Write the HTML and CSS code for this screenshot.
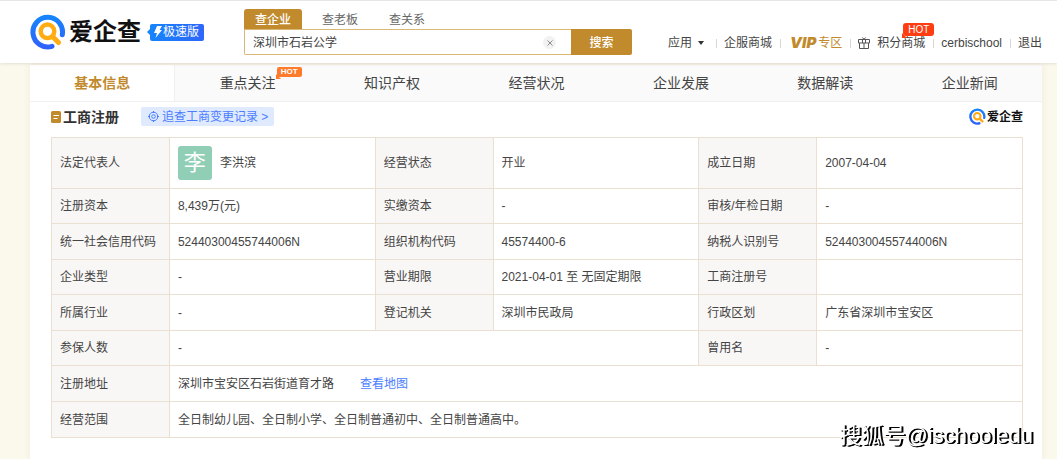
FILE: index.html
```html
<!DOCTYPE html>
<html lang="zh-CN">
<head>
<meta charset="utf-8">
<meta name="viewport" content="width=device-width, initial-scale=1">
<title>深圳市石岩公学 - 爱企查</title>
<link rel="stylesheet" href="styles.css">
</head>
<body>
<svg class="defs" width="0" height="0" aria-hidden="true">
  <defs>
    <linearGradient id="ring" x1="0" y1="0" x2="0" y2="1">
      <stop offset="0" stop-color="#1684fc"/>
      <stop offset="1" stop-color="#2f62fb"/>
    </linearGradient>
    <symbol id="mark" viewBox="0 0 36 36">
      <path d="M32.300 20.800A14.800 14.800 0 1 0 22 32.300" fill="none" stroke="url(#ring)" stroke-width="5" stroke-linecap="round"/>
      <circle cx="17.500" cy="17.300" r="6.800" fill="none" stroke="#ffab12" stroke-width="4.400"/>
      <path d="M23 23l5.500 5.500" stroke="#ffab12" stroke-width="5" stroke-linecap="round"/>
    </symbol>
  </defs>
</svg>

<header class="header">
  <a class="logo" href="#">
    <svg class="logo-mark"><use href="#mark"/></svg>
    <span class="logo-name">爱企查</span>
    <span class="edition">
      <svg width="8" height="12" viewBox="0 0 8 12"><path d="M3 0h5L5.600 4H8L1.500 12 3 7H0z" fill="#fff"/></svg>极速版
    </span>
  </a>

  <form class="search" role="search">
    <div class="search-tabs">
      <button type="button" class="search-tab active">查企业</button>
      <button type="button" class="search-tab">查老板</button>
      <button type="button" class="search-tab">查关系</button>
    </div>
    <div class="search-row">
      <input class="search-input" type="text" aria-label="搜索企业" value="深圳市石岩公学">
      <button type="button" class="search-clear" aria-label="清空">
        <svg width="6" height="6" viewBox="0 0 6 6"><path d="M.5.5l5 5m0-5l-5 5" stroke="#8c8c8c"/></svg>
      </button>
      <button type="button" class="search-submit">搜索</button>
    </div>
  </form>

  <nav class="nav">
    <button type="button" class="nav-item apps">应用
      <svg width="6" height="4" viewBox="0 0 6 4"><path d="M0 0h6L3 4z" fill="#333"/></svg>
    </button>
    <a class="nav-item" href="#">企服商城</a>
    <a class="nav-item vip" href="#"><b class="vip-word">VIP</b>专区</a>
    <a class="nav-item mall" href="#">
      <svg width="12" height="12" viewBox="0 0 12 12" fill="none" stroke="#555"><path d="M.5 2.500h11v3.500H.5zM1.500 6v5.500h9V6M4.500 2.500v3.500M7.500 2.500v3.500M6 6v5.500M6 2.500L4.500.5M6 2.500L7.500.5"/></svg>
      <span class="mall-label">积分商城<span class="hot hot-red">HOT</span></span>
    </a>
    <a class="nav-item" href="#">cerbischool</a>
    <a class="nav-item" href="#">退出</a>
  </nav>
</header>

<main class="card">
  <nav class="tabs">
    <a class="tab current" href="#">基本信息</a>
    <a class="tab" href="#"><span class="tab-label">重点关注<span class="hot hot-orange">HOT</span></span></a>
    <a class="tab" href="#">知识产权</a>
    <a class="tab" href="#">经营状况</a>
    <a class="tab" href="#">企业发展</a>
    <a class="tab" href="#">数据解读</a>
    <a class="tab" href="#">企业新闻</a>
  </nav>

  <section class="section">
    <div class="section-head">
      <svg width="10" height="12" viewBox="0 0 10 12"><rect width="10" height="12" rx="1.500" fill="#c08a2d"/><path d="M2.500 4.500h5.500M2.500 7.500h4" stroke="#fff"/></svg>
      <h2 class="section-title">工商注册</h2>
      <a class="trace" href="#">
        <svg width="11" height="11" viewBox="0 0 11 11" fill="none" stroke="#4a7dff"><circle cx="5.500" cy="5.500" r="4.300"/><circle cx="5.500" cy="5.500" r="1.800"/><path d="M5.500 0v2M5.500 9v2M0 5.500h2M9 5.500h2"/></svg>
        追查工商变更记录 &gt;
      </a>
      <span class="source">
        <svg class="source-mark"><use href="#mark"/></svg>爱企查
      </span>
    </div>

    <table class="info">
      <colgroup>
        <col class="col-label"><col class="col-value"><col class="col-label"><col class="col-value"><col class="col-label"><col class="col-value">
      </colgroup>
      <tbody>
        <tr class="tall">
          <th scope="row">法定代表人</th>
          <td><span class="person"><span class="avatar">李</span>李洪滨</span></td>
          <th scope="row">经营状态</th><td>开业</td>
          <th scope="row">成立日期</th><td>2007-04-04</td>
        </tr>
        <tr>
          <th scope="row">注册资本</th><td>8,439万(元)</td>
          <th scope="row">实缴资本</th><td>-</td>
          <th scope="row">审核/年检日期</th><td>-</td>
        </tr>
        <tr>
          <th scope="row">统一社会信用代码</th><td>52440300455744006N</td>
          <th scope="row">组织机构代码</th><td>45574400-6</td>
          <th scope="row">纳税人识别号</th><td>52440300455744006N</td>
        </tr>
        <tr>
          <th scope="row">企业类型</th><td>-</td>
          <th scope="row">营业期限</th><td>2021-04-01 至 无固定期限</td>
          <th scope="row">工商注册号</th><td></td>
        </tr>
        <tr>
          <th scope="row">所属行业</th><td>-</td>
          <th scope="row">登记机关</th><td>深圳市民政局</td>
          <th scope="row">行政区划</th><td>广东省深圳市宝安区</td>
        </tr>
        <tr>
          <th scope="row">参保人数</th><td colspan="3">-</td>
          <th scope="row">曾用名</th><td>-</td>
        </tr>
        <tr>
          <th scope="row">注册地址</th>
          <td colspan="5">深圳市宝安区石岩街道育才路<a class="map" href="#">查看地图</a></td>
        </tr>
        <tr>
          <th scope="row">经营范围</th>
          <td colspan="5">全日制幼儿园、全日制小学、全日制普通初中、全日制普通高中。</td>
        </tr>
      </tbody>
    </table>
  </section>
</main>
<div class="watermark">搜狐号@ischooledu</div>
</body>
</html>
```

FILE: styles.css
```css
* { box-sizing: border-box; }

body {
  margin: 0;
  min-height: 100vh;
  display: flex;
  flex-direction: column;
  background: #fbf8ec;
  color: #444;
  font: 12px/18px "Liberation Sans", "Noto Sans CJK SC", sans-serif;
}

a { color: inherit; text-decoration: none; }
button { border: 0; padding: 0; background: none; color: inherit; font: inherit; cursor: pointer; }
svg { flex: none; display: block; }
.defs { position: absolute; }

/* Header */
.header {
  position: relative;
  display: flex;
  align-items: flex-end;
  height: 63px;
  padding: 0 15px 8px 30px;
  border-top: 1px solid #e6e6e6;
  background: #fff;
  box-shadow: 0 1px 3px rgba(0, 0, 0, .1);
  white-space: nowrap;
}
.logo { display: flex; align-items: center; width: 214px; margin-bottom: 5px; }
.logo-mark { width: 36px; height: 36px; }
.logo-name { margin-left: 3px; font-size: 24px; line-height: 36px; font-weight: 700; color: #111; }
.edition {
  position: relative;
  display: flex;
  align-items: center;
  gap: 1px;
  height: 17px;
  margin-left: 9px;
  padding: 0 5px 0 4px;
  border-radius: 2px;
  background: linear-gradient(90deg, #1684fc, #2f66fb);
  color: #fff;
}
.edition::before {
  content: "";
  position: absolute;
  left: -3px;
  top: 5px;
  border: 3px solid transparent;
  border-left: 0;
  border-right-color: #1684fc;
}

.search { flex: 0 1 388px; }
.search-tabs { display: flex; gap: 9px; }
.search-tab { height: 20px; padding: 2px 11px 0; border-radius: 3px 3px 0 0; color: #666; }
.search-tab.active { background: #c08a2d; color: #fff; font-weight: 500; }
.search-row { position: relative; display: flex; height: 26px; }
.search-input {
  flex: 1;
  min-width: 0;
  padding: 2px 32px 0 8px;
  border: 1px solid #d9b877;
  border-right: 0;
  border-radius: 0 0 0 2px;
  color: #444;
  font: inherit;
  outline: 0;
}
.search-clear {
  position: absolute;
  right: 76px;
  top: 7px;
  display: grid;
  place-items: center;
  width: 13px;
  height: 13px;
  border-radius: 50%;
  background: #f2f2f2;
}
.search-submit { width: 61px; padding-top: 1px; border-radius: 0 2px 2px 0; background: #c08a2d; color: #fff; font-weight: 500; }

.nav { display: flex; margin-left: auto; }
.nav-item { position: relative; display: flex; align-items: center; height: 24px; padding: 0 8px; }
.nav-item:last-child { padding-right: 0; }
.nav-item + .nav-item::before {
  content: "";
  position: absolute;
  left: 0;
  top: 8px;
  width: 1px;
  height: 9px;
  background: #d8d8d8;
}
.nav .apps { gap: 6px; padding: 0 12px 0 0; }
.nav .vip { gap: 2px; padding-left: 10px; color: #c08a2d; }
.vip-word { font: italic 900 15px/18px Inter, sans-serif; }
.mall { gap: 7px; }
.mall-label, .tab-label { position: relative; }

.hot { position: absolute; color: #fff; text-align: center; }
.hot::after {
  content: "";
  position: absolute;
  left: -1px;
  bottom: -2px;
  border-right: 5px solid transparent;
  border-bottom: 5px solid;
}
.hot-red { right: -9px; top: -11px; width: 31px; border-radius: 3px; background: #ff3d12; font-size: 10px; line-height: 13px; }
.hot-red::after { border-bottom-color: #ff3d12; }
.hot-orange { left: 100%; top: -7px; width: 25px; margin-left: 1px; border-radius: 2px; background: #ff7a2b; font-size: 8px; font-weight: 700; line-height: 10px; }
.hot-orange::after { border-bottom-color: #ff7a2b; }

/* Company card */
.card { flex: 1; margin: 2px 15px 0 30px; background: #fff; box-shadow: 0 0 6px rgba(160, 140, 90, .12); }
.tabs { display: flex; border-bottom: 1px solid #f0f0f0; background: #fafafa; }
.tab { flex: 1; display: flex; justify-content: center; align-items: center; height: 36px; font-size: 14px; }
.current { background: #fff; border-right: 1px solid #f0f0f0; color: #c08a2d; font-weight: 700; }

.section { padding: 4px 19px 20px 21px; }
.section-head { display: flex; align-items: center; height: 21px; }
.section-title { margin: 0 0 0 2px; font-size: 14px; line-height: 20px; color: #333; }
.trace {
  display: flex;
  align-items: center;
  gap: 3px;
  height: 19px;
  margin-left: 22px;
  padding: 0 6px 0 7px;
  border-radius: 2px;
  background: #e0eaff;
  color: #4a7dff;
}
.source { display: flex; align-items: center; gap: 1px; margin-left: auto; color: #111; font-weight: 700; }
.source-mark { width: 17px; height: 17px; }

.info { width: 100%; margin-top: 10px; border-collapse: collapse; table-layout: fixed; }
.col-label { width: 12.14%; }
.col-value { width: 21.19%; }
.info tr { height: 35px; }
.info tr:nth-child(odd), .info tr:last-child { height: 36px; }
.info tr.tall { height: 51px; }
.info th, .info td { padding: 0 8px; border: 1px solid #eae0d1; text-align: left; font-weight: 400; }
.info th { background: #f9f7f6; }
.person { display: flex; align-items: center; gap: 8px; }
.avatar { width: 34px; height: 34px; border-radius: 3px; background: #90ceb5; color: #fff; font-size: 22px; line-height: 34px; text-align: center; }
.map { margin-left: 26px; color: #4a7dff; }

.watermark {
  position: fixed;
  right: 24px;
  bottom: 9px;
  color: #fff;
  font-size: 22px;
  line-height: 28px;
  text-shadow: 1px 1px 0 #000, 2px 1px 0 #000;
}
```
